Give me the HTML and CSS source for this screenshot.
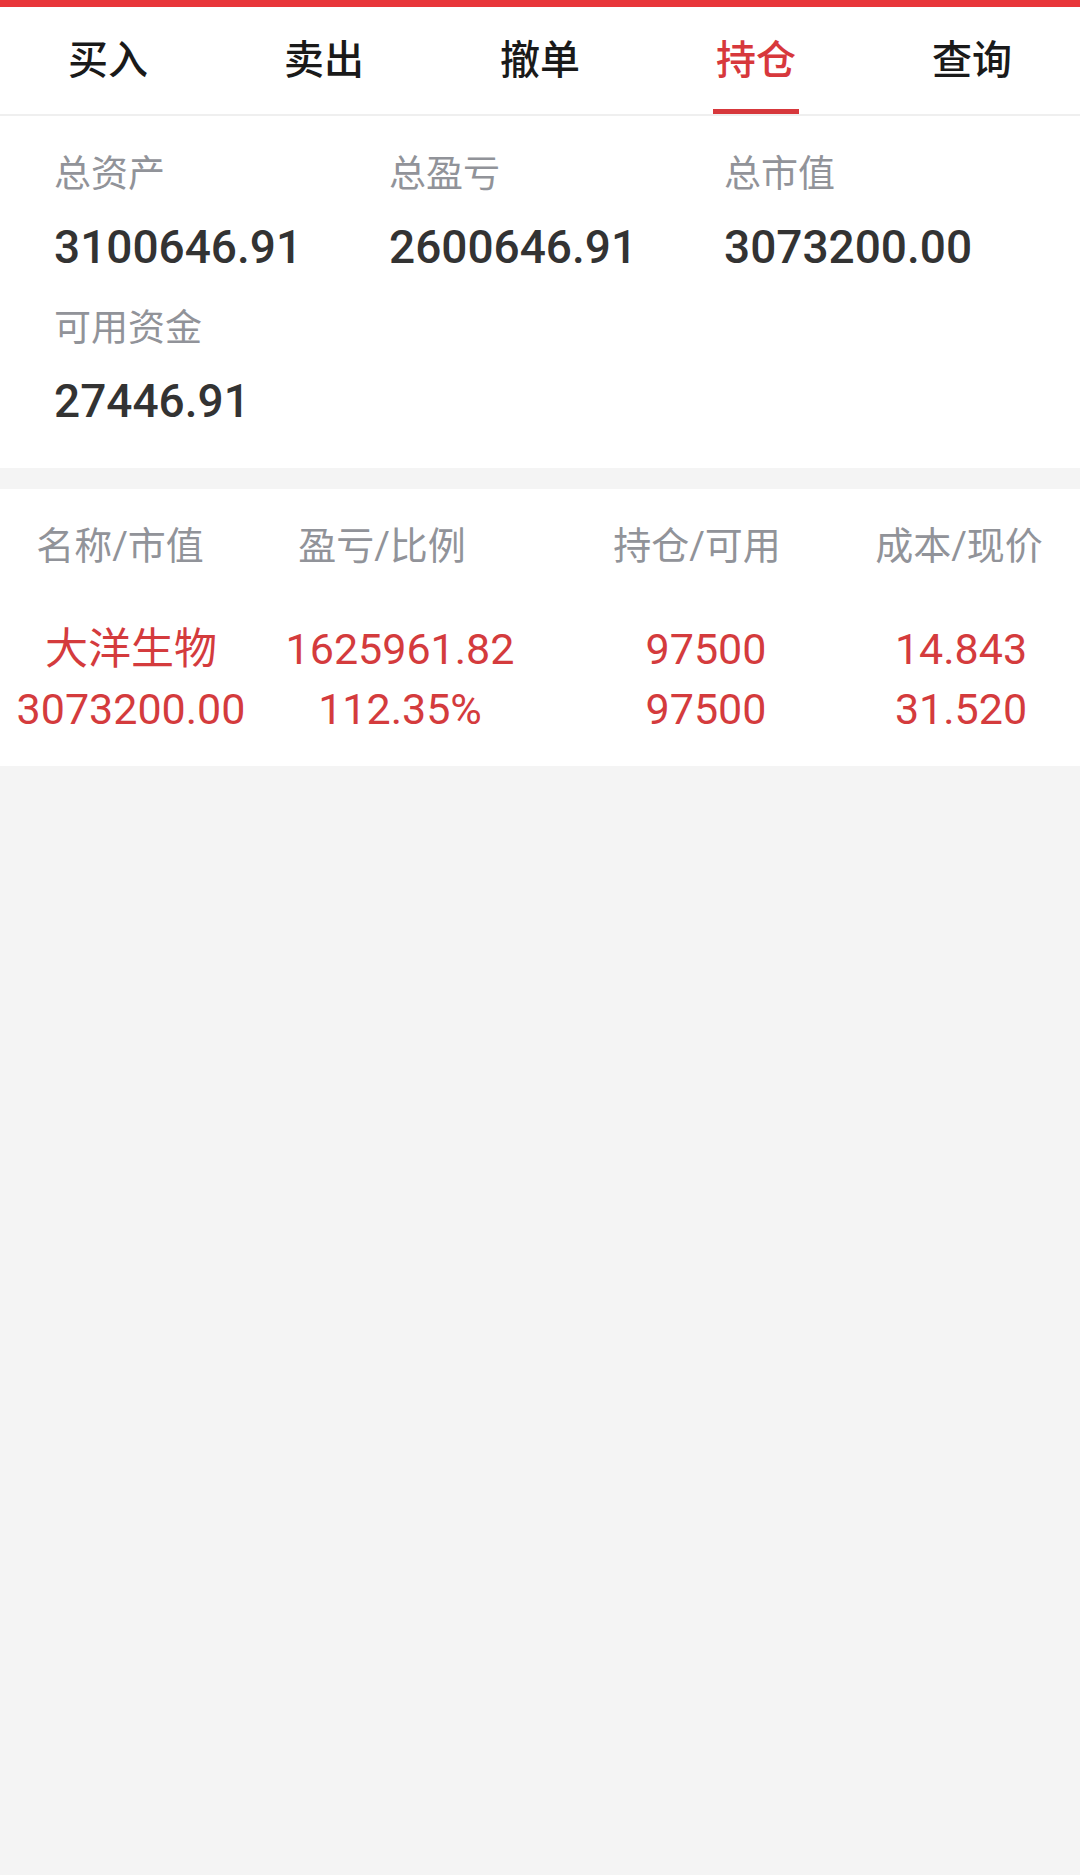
FILE: index.html
```html
<!DOCTYPE html>
<html lang="zh-CN">
<head>
  <meta charset="UTF-8">
  <meta name="viewport" content="width=device-width, initial-scale=1.0">
  <title>持仓</title>
  <link rel="stylesheet" href="styles.css">
</head>
<body>
  <div class="topbar"></div>

  <nav class="tabs">
    <div class="tab">买入</div>
    <div class="tab">卖出</div>
    <div class="tab">撤单</div>
    <div class="tab active">持仓</div>
    <div class="tab">查询</div>
  </nav>

  <section class="summary">
    <div class="stat">
      <div class="label">总资产</div>
      <div class="value">3100646.91</div>
    </div>
    <div class="stat">
      <div class="label">总盈亏</div>
      <div class="value">2600646.91</div>
    </div>
    <div class="stat">
      <div class="label">总市值</div>
      <div class="value">3073200.00</div>
    </div>
    <div class="stat">
      <div class="label">可用资金</div>
      <div class="value">27446.91</div>
    </div>
  </section>

  <section class="holdings">
    <div class="head">
      <div>名称/市值</div>
      <div>盈亏/比例</div>
      <div>持仓/可用</div>
      <div>成本/现价</div>
    </div>
    <div class="row">
      <div class="cell">
        <div>大洋生物</div>
        <div>3073200.00</div>
      </div>
      <div class="cell">
        <div>1625961.82</div>
        <div>112.35%</div>
      </div>
      <div class="cell">
        <div>97500</div>
        <div>97500</div>
      </div>
      <div class="cell">
        <div>14.843</div>
        <div>31.520</div>
      </div>
    </div>
  </section>
</body>
</html>
```

FILE: styles.css
```css
* {
  padding: 0;
  margin: 0;
  box-sizing: border-box;
}
html, body {min-height: 100%;}
body {
  background: #f4f4f4;
  font-family: Roboto, "Noto Sans CJK SC", sans-serif;
  min-height: 100vh;
}

.topbar {
  height: 7px;
  background: #e8363a;
}

.tabs {
  display: grid;
  grid-template-columns: repeat(5, 1fr);
  height: 109px;
  background: #fff;
  border-bottom: 2px solid #efefef;
}
.tab {
  position: relative;
  display: flex;
  align-items: center;
  justify-content: center;
  padding-bottom: 8px;
  font-size: 40px;
  font-weight: 500;
  color: #1a1a1a;
}
.tab.active {
  color: #d7383c;
}
.tab.active::after {
  content: "";
  position: absolute;
  left: 50%;
  bottom: 0;
  width: 86px;
  height: 5px;
  margin-left: -43px;
  background: #d7383c;
}

.summary {
  display: grid;
  grid-template-columns: repeat(3, 335px);
  row-gap: 40px;
  padding: 40px 0 44px 54px;
  background: #fff;
}
.stat {
  display: flex;
  flex-direction: column;
  gap: 30px;
}
.label {
  font-size: 37px;
  line-height: 38px;
  color: #919399;
}
.value {
  font-size: 46px;
  line-height: 46px;
  font-weight: 500;
  color: #333;
}

.holdings {
  margin-top: 21px;
  padding: 37px 0 27px;
  background: #fff;
}
.head {
  display: grid;
  grid-template-columns: 240px 284px 346px 178px;
  font-size: 38px;
  line-height: 40px;
  color: #919399;
  text-align: center;
}
.row {
  display: grid;
  grid-template-columns: 262px 276px 336px 174px;
  margin-top: 53px;
  font-size: 43px;
  line-height: 60px;
  color: #d43b3d;
  text-align: center;
}
```
